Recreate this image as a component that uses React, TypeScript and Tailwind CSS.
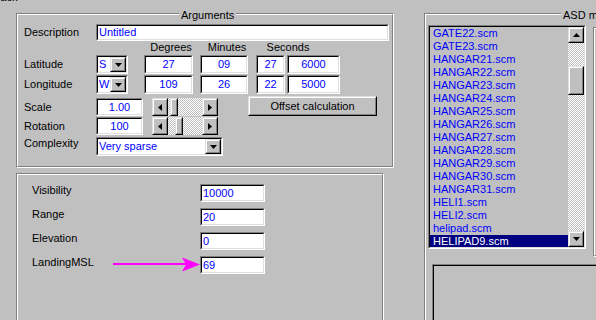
import type { ReactNode } from "react";

const ITEMS = [
  "GATE22.scm",
  "GATE23.scm",
  "HANGAR21.scm",
  "HANGAR22.scm",
  "HANGAR23.scm",
  "HANGAR24.scm",
  "HANGAR25.scm",
  "HANGAR26.scm",
  "HANGAR27.scm",
  "HANGAR28.scm",
  "HANGAR29.scm",
  "HANGAR30.scm",
  "HANGAR31.scm",
  "HELI1.scm",
  "HELI2.scm",
  "helipad.scm",
  "HELIPAD9.scm",
];

/** Etched frame, optional caption sitting on the top line. */
function Group({ label, labelPos = "", className = "", children }: { label?: string; labelPos?: string; className?: string; children?: ReactNode }) {
  return (
    <div className={`relative shrink-0 border border-t-[#808080] border-l-[#808080] border-r-white border-b-white ${className}`}>
      <div className="h-full border border-t-white border-l-white border-r-[#808080] border-b-[#808080]">{children}</div>
      {label && <span className={`absolute top-[-5px] bg-[#c0c0c0] px-[2px] whitespace-nowrap ${labelPos}`}>{label}</span>}
    </div>
  );
}

/** Sunken white edit box. */
function Field({ className = "", center, children }: { className?: string; center?: boolean; children?: ReactNode }) {
  return (
    <div className={`shrink-0 border border-t-[#808080] border-l-[#808080] border-r-white border-b-white ${className}`}>
      <div className={`flex h-full items-center border border-t-black border-l-black border-r-[#dfdfdf] border-b-[#dfdfdf] bg-white text-[#0000ff] ${center ? "justify-center" : "pl-[1px]"}`}>
        {children}
      </div>
    </div>
  );
}

function Btn({ className = "", children }: { className?: string; children?: ReactNode }) {
  return (
    <div className={`shrink-0 border border-t-[#dfdfdf] border-l-[#dfdfdf] border-r-black border-b-black ${className}`}>
      <div className="flex h-full items-center justify-center border border-t-white border-l-white border-r-[#808080] border-b-[#808080] bg-[#c0c0c0]">
        {children}
      </div>
    </div>
  );
}

const Down = () => (
  <svg width="7" height="4" viewBox="0 0 7 4"><path d="M0 0h7L3.5 4z" fill="#000" /></svg>
);
const Up = () => (
  <svg width="7" height="4" viewBox="0 0 7 4"><path d="M0 4h7L3.5 0z" fill="#000" /></svg>
);
const Left = () => (
  <svg width="4" height="7" viewBox="0 0 4 7"><path d="M4 0v7L0 3.5z" fill="#000" /></svg>
);
const Right = () => (
  <svg width="4" height="7" viewBox="0 0 4 7"><path d="M0 0v7L4 3.5z" fill="#000" /></svg>
);

function Combo({ className = "", value }: { className?: string; value: string }) {
  return (
    <div className={`shrink-0 border border-t-[#808080] border-l-[#808080] border-r-white border-b-white ${className}`}>
      <div className="flex h-full border border-t-black border-l-black border-r-[#dfdfdf] border-b-[#dfdfdf] bg-white text-[#0000ff]">
        <span className="flex flex-1 items-center pl-[1px]">{value}</span>
        <Btn className="h-full w-[16px]"><Down /></Btn>
      </div>
    </div>
  );
}

function Slider({ thumb }: { thumb: string }) {
  return (
    <div className="ml-[9px] flex h-[18px] w-[66px] shrink-0">
      <Btn className="h-full w-[16px]"><Left /></Btn>
      <div className="flex h-full flex-1 bg-[image:repeating-conic-gradient(#fff_0%_25%,#c0c0c0_0%_50%)] bg-[length:2px_2px]">
        <Btn className={`h-full w-[8px] ${thumb}`} />
      </div>
      <Btn className="h-full w-[16px]"><Right /></Btn>
    </div>
  );
}

function Row({ label, className = "", children }: { label: string; className?: string; children: ReactNode }) {
  return (
    <div className={`flex items-center ${className}`}>
      <span className="w-[72px] shrink-0">{label}</span>
      {children}
    </div>
  );
}

export default function App() {
  return (
    <div className="h-[320px] w-[596px] overflow-hidden bg-[#c0c0c0] font-['Liberation_Sans',Arial,sans-serif] text-[11px] leading-[13px] text-black">
      <div className="flex h-0">
        <span className="-ml-[7px] -mt-[9px] block">Back</span>
      </div>

      <div className="flex items-start pt-[13px]">
        {/* left side */}
        <div className="ml-[16px] flex w-[378px] shrink-0 flex-col">
          <Group label="Arguments" labelPos="left-[162px]" className="h-[155px] w-[378px]">
            <div className="pl-[6px] pt-[9px]">
              <Row label="Description">
                <Field className="h-[17px] w-[293px]">Untitled</Field>
              </Row>
              <div className="flex h-[13px] pl-[117px]">
                <span className="w-[60px] text-center">Degrees</span>
                <span className="w-[52px] text-center">Minutes</span>
                <span className="w-[70px] text-center">Seconds</span>
              </div>
              <Row label="Latitude" className="mt-[1px] h-[19px]">
                <Combo className="h-[19px] w-[32px]" value="S" />
                <Field center className="ml-[16px] h-[19px] w-[49px]">27</Field>
                <Field center className="ml-[7px] h-[19px] w-[48px]">09</Field>
                <Field center className="ml-[8px] h-[19px] w-[29px]">27</Field>
                <Field center className="ml-[2px] h-[19px] w-[53px]">6000</Field>
              </Row>
              <Row label="Longitude" className="mt-[1px] h-[19px]">
                <Combo className="h-[19px] w-[32px]" value="W" />
                <Field center className="ml-[16px] h-[19px] w-[49px]">109</Field>
                <Field center className="ml-[7px] h-[19px] w-[48px]">26</Field>
                <Field center className="ml-[8px] h-[19px] w-[29px]">22</Field>
                <Field center className="ml-[2px] h-[19px] w-[53px]">5000</Field>
              </Row>
              <Row label="Scale" className="mt-[4px] h-[18px]">
                <Field center className="h-[18px] w-[47px]">1.00</Field>
                <Slider thumb="ml-[2px]" />
                <Btn className="-mt-[2px] ml-[30px] h-[20px] w-[129px] self-start">
                  <span className="text-black">Offset calculation</span>
                </Btn>
              </Row>
              <Row label="Rotation" className="mt-[1px] h-[18px]">
                <Field center className="h-[18px] w-[47px]">100</Field>
                <Slider thumb="ml-[7px]" />
              </Row>
              <div className="mt-[2px] flex h-[19px] items-start">
                <span className="w-[72px] shrink-0">Complexity</span>
                <Combo className="h-[19px] w-[127px]" value="Very sparse" />
              </div>
            </div>
          </Group>

          <Group className="mt-[5px] h-[160px] w-[368px]">
            <div className="flex flex-col gap-[6px] pl-[14px] pt-[9px]">
              {[
                ["Visibility", "10000"],
                ["Range", "20"],
                ["Elevation", "0"],
              ].map(([l, v]) => (
                <div key={l} className="flex h-[18px] items-start">
                  <span className="w-[168px] shrink-0">{l}</span>
                  <Field className="h-[18px] w-[65px]">{v}</Field>
                </div>
              ))}
              <div className="flex h-[18px] items-start">
                <span className="w-[81px] shrink-0">LandingMSL</span>
                <svg width="87" height="18" viewBox="0 0 87 18" className="shrink-0">
                  <line x1="0" y1="8" x2="74" y2="8" stroke="#ff00ff" strokeWidth="2" />
                  <path d="M69 1.5L87 8.5L69 15.5L73 8.5z" fill="#ff00ff" />
                </svg>
                <Field className="h-[18px] w-[65px]">69</Field>
              </div>
            </div>
          </Group>
        </div>

        {/* right side */}
        <Group label="ASD models" labelPos="left-[136px]" className="ml-[30px] h-[330px] w-[200px]">
          <div className="flex items-start pl-[2px] pt-[10px]">
            <div className="h-[224px] w-[158px] shrink-0 border border-t-[#808080] border-l-[#808080] border-r-white border-b-white">
              <div className="flex h-full border border-t-black border-l-black border-r-[#dfdfdf] border-b-[#dfdfdf] bg-[#c0c0c0]">
                <ul className="w-[138px] overflow-hidden">
                  {ITEMS.map((it) => (
                    <li
                      key={it}
                      className={`h-[13px] pl-[3px] leading-[13px] ${it === "HELIPAD9.scm" ? "bg-[#000080] text-white" : "text-[#0000ff]"}`}
                    >
                      {it}
                    </li>
                  ))}
                </ul>
                <div className="flex w-[16px] flex-col">
                  <Btn className="h-[16px] w-[16px]"><Up /></Btn>
                  <div className="flex-1 bg-[image:repeating-conic-gradient(#fff_0%_25%,#c0c0c0_0%_50%)] bg-[length:2px_2px] pt-[23px]">
                    <Btn className="h-[29px] w-[16px]" />
                  </div>
                  <Btn className="h-[16px] w-[16px]"><Down /></Btn>
                </div>
              </div>
            </div>
            <Group className="ml-[7px] mt-[2px] h-[230px] w-[40px]" />
          </div>
          <div className="ml-[6px] mt-[7px] h-[80px] w-[200px] border border-t-[#808080] border-l-[#808080] border-r-white border-b-white">
            <div className="h-full border border-t-black border-l-black border-r-[#dfdfdf] border-b-[#dfdfdf]" />
          </div>
        </Group>
      </div>
    </div>
  );
}
